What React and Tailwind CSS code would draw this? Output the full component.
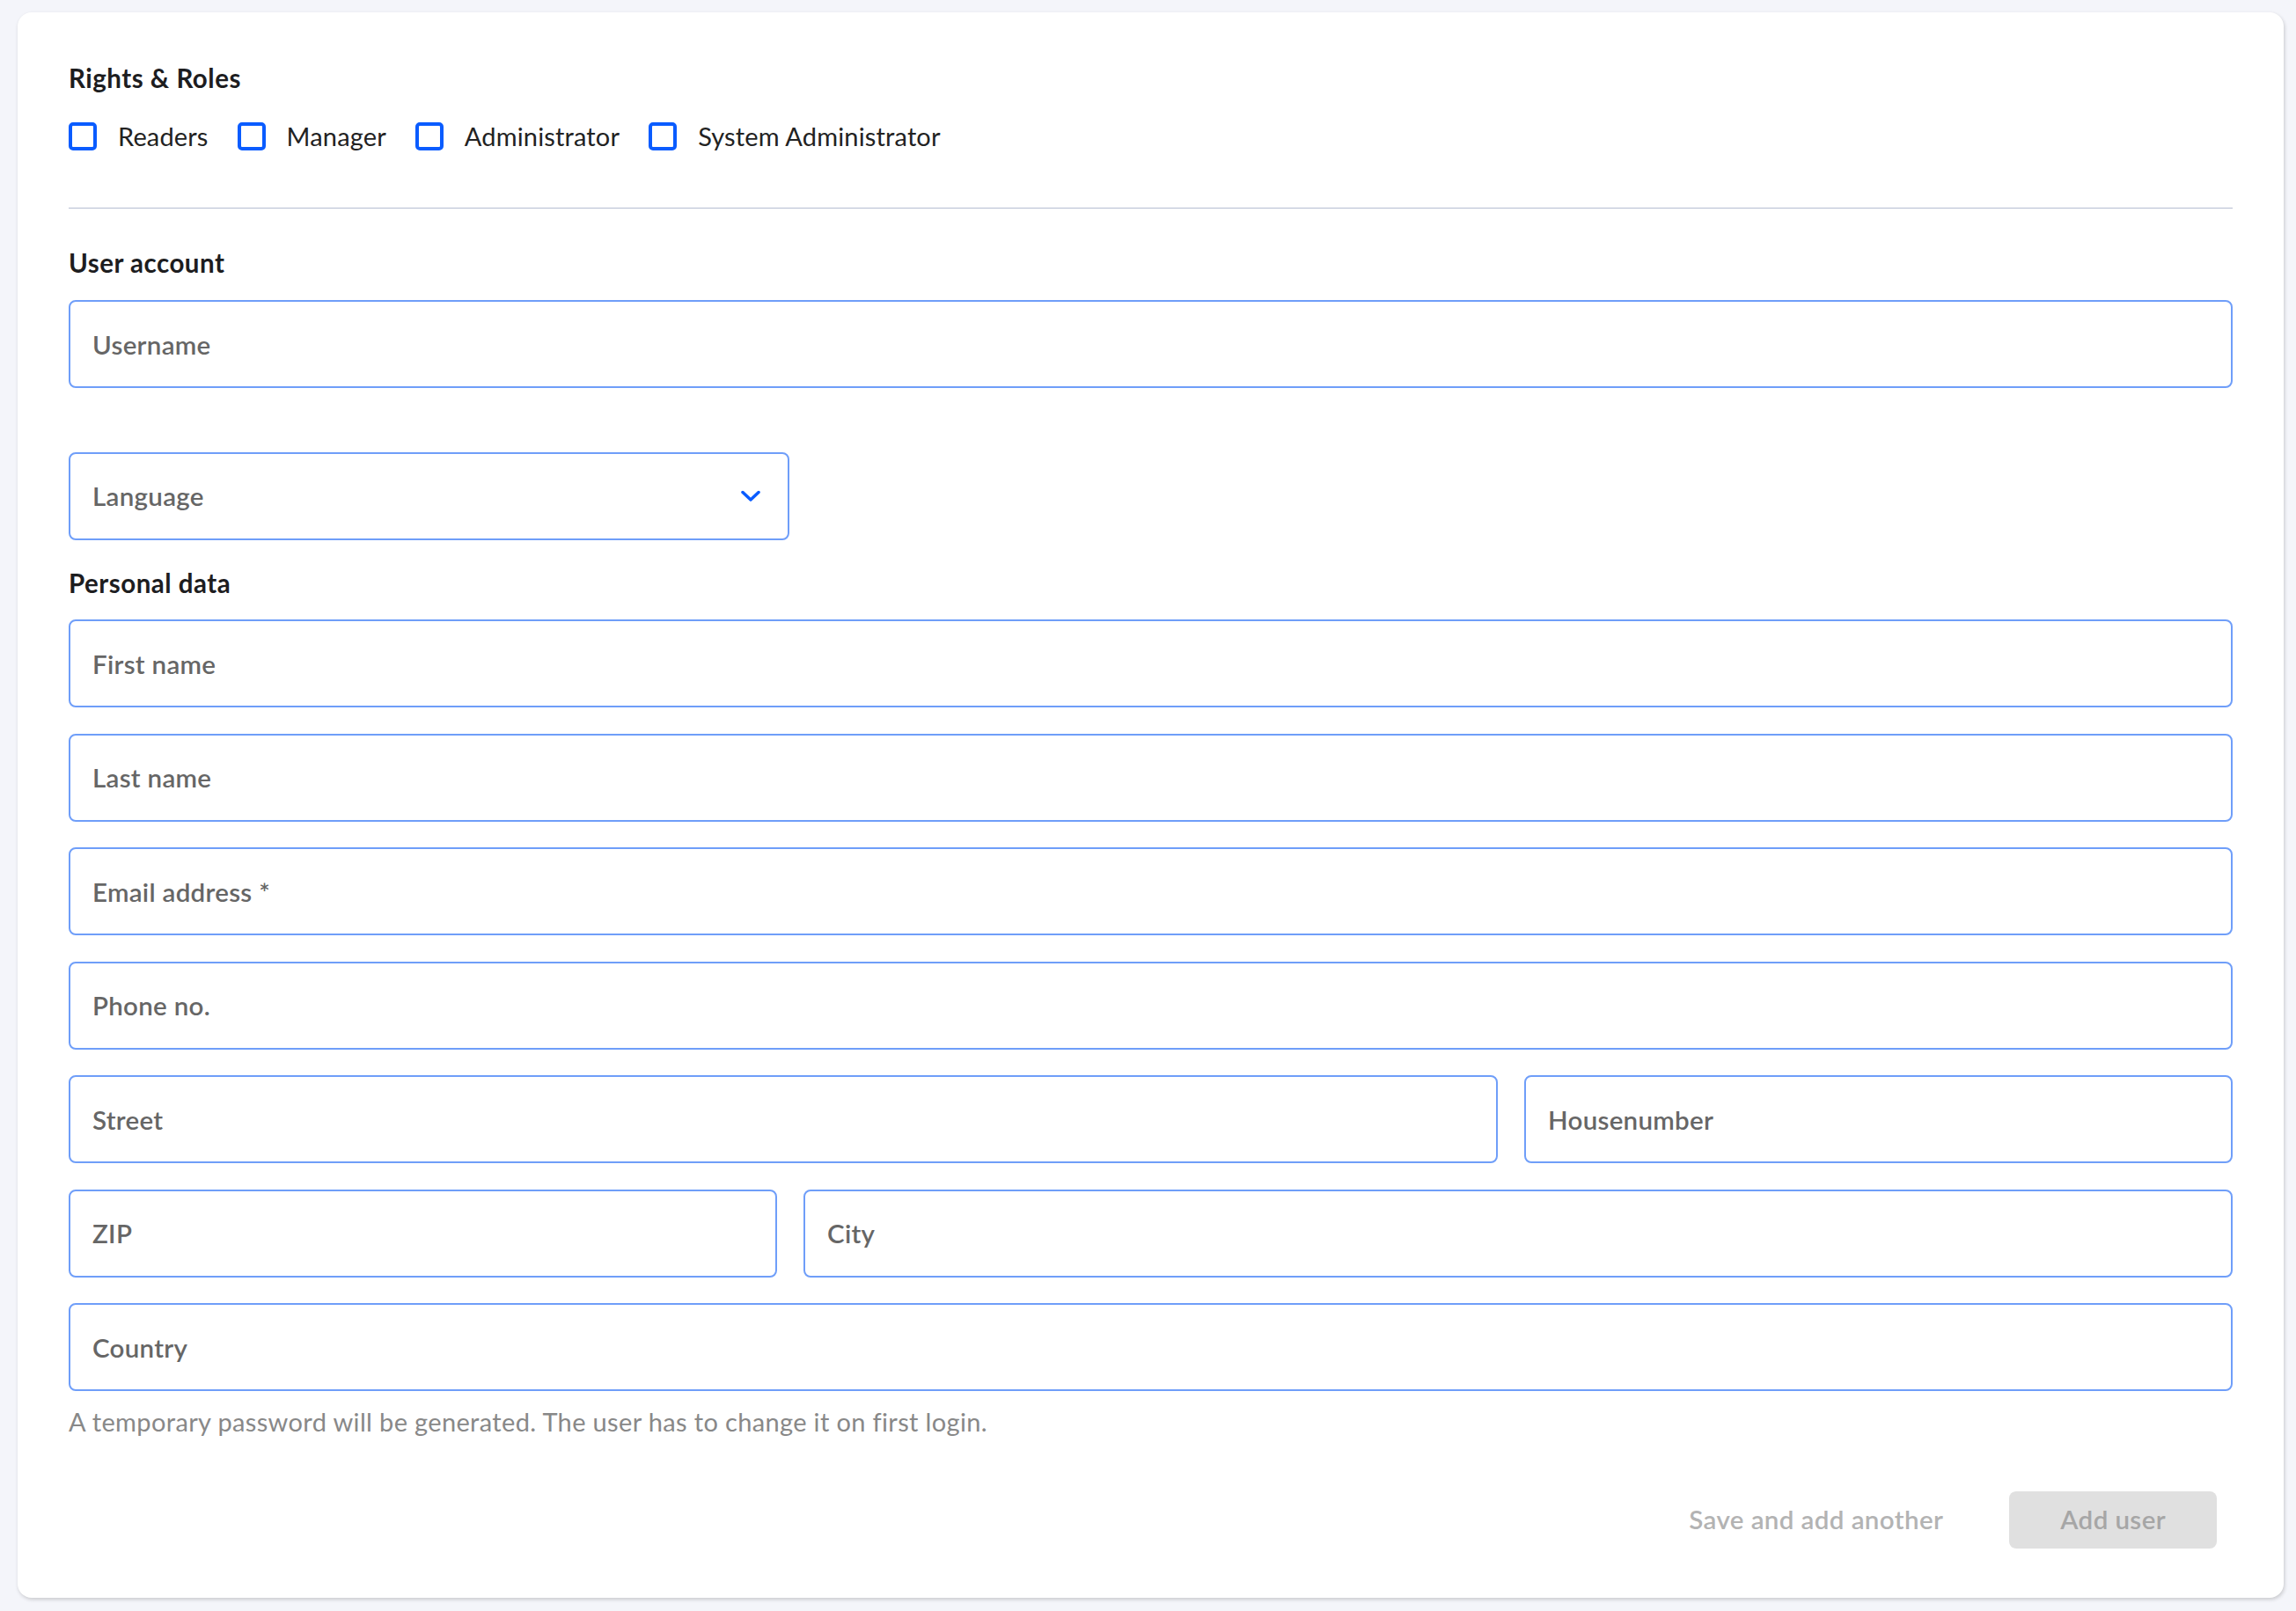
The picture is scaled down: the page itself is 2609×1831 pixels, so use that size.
import React from "react";

const roles = ["Readers", "Manager", "Administrator", "System Administrator"];

function Field({ placeholder, className = "" }) {
  return (
    <input
      type="text"
      placeholder={placeholder}
      className={`h-[100px] w-full rounded-lg border-2 border-[#6f9ef9] bg-white px-[25px] text-[29.5px] font-semibold tracking-[0.3px] text-[#333] outline-none placeholder:text-[#666] ${className}`}
    />
  );
}

function Heading({ children, className = "" }) {
  return (
    <h2 className={`text-[29.5px] font-bold leading-[34px] tracking-[0.5px] text-[#1d1d1f] ${className}`}>
      {children}
    </h2>
  );
}

export default function App() {
  return (
    <div
      className="min-h-screen bg-[#f4f5fa] pt-[14px] pb-[13px] pl-[20px] pr-[14px]"
      style={{ fontFamily: "Lato, 'Open Sans', sans-serif" }}
    >
      <div className="rounded-2xl bg-white px-[58px] pt-[58px] pb-[56px] shadow-[1px_2px_4px_rgba(0,0,0,0.18)]">
        <Heading>Rights &amp; Roles</Heading>

        <div className="mt-[33px] flex items-center gap-[33px]">
          {roles.map((r) => (
            <label key={r} className="flex items-center gap-[24px] cursor-pointer">
              <span className="h-[32px] w-[32px] rounded-[5px] border-[4px] border-[#0a5cff] bg-white" />
              <span className="text-[29px] leading-[32px] tracking-[0.15px] text-[#222]">{r}</span>
            </label>
          ))}
        </div>

        <div className="mt-[65px] h-px bg-[#b5bdd2]" />

        <Heading className="mt-[45px]">User account</Heading>
        <div className="mt-[25px]">
          <Field placeholder="Username" />
        </div>

        <div className="mt-[73px] flex h-[100px] w-[819px] items-center justify-between rounded-lg border-2 border-[#6f9ef9] pl-[25px] pr-[31px]">
          <span className="text-[29.5px] font-semibold tracking-[0.3px] text-[#666]">Language</span>
          <svg width="22" height="14" viewBox="0 0 22 14" fill="none">
            <path d="M2 2.5l9 8.5 9-8.5" stroke="#0a5cff" strokeWidth="3.5" strokeLinecap="round" strokeLinejoin="round" />
          </svg>
        </div>

        <Heading className="mt-[32px]">Personal data</Heading>
        <div className="mt-[24px] flex flex-col gap-[29.5px]">
          <Field placeholder="First name" />
          <Field placeholder="Last name" />
          <Field placeholder="Email address *" />
          <Field placeholder="Phone no." />
          <div className="grid grid-cols-[1fr_805px] gap-[30px]">
            <Field placeholder="Street" />
            <Field placeholder="Housenumber" />
          </div>
          <div className="grid grid-cols-[805px_1fr] gap-[30px]">
            <Field placeholder="ZIP" />
            <Field placeholder="City" />
          </div>
          <Field placeholder="Country" />
        </div>

        <p className="mt-[18px] text-[29px] leading-[34px] tracking-[0.35px] text-[#888]">
          A temporary password will be generated. The user has to change it on first login.
        </p>

        <div className="mt-[62px] flex items-center justify-end gap-[75px] pr-[18px]">
          <button className="text-[29.5px] font-semibold tracking-[0.4px] text-[#b3b3b3]">Save and add another</button>
          <button className="h-[65px] rounded-lg bg-[#e0e0e0] px-[58px] text-[29.5px] font-semibold tracking-[0.4px] text-[#a6a6a6]">
            Add user
          </button>
        </div>
      </div>
    </div>
  );
}
